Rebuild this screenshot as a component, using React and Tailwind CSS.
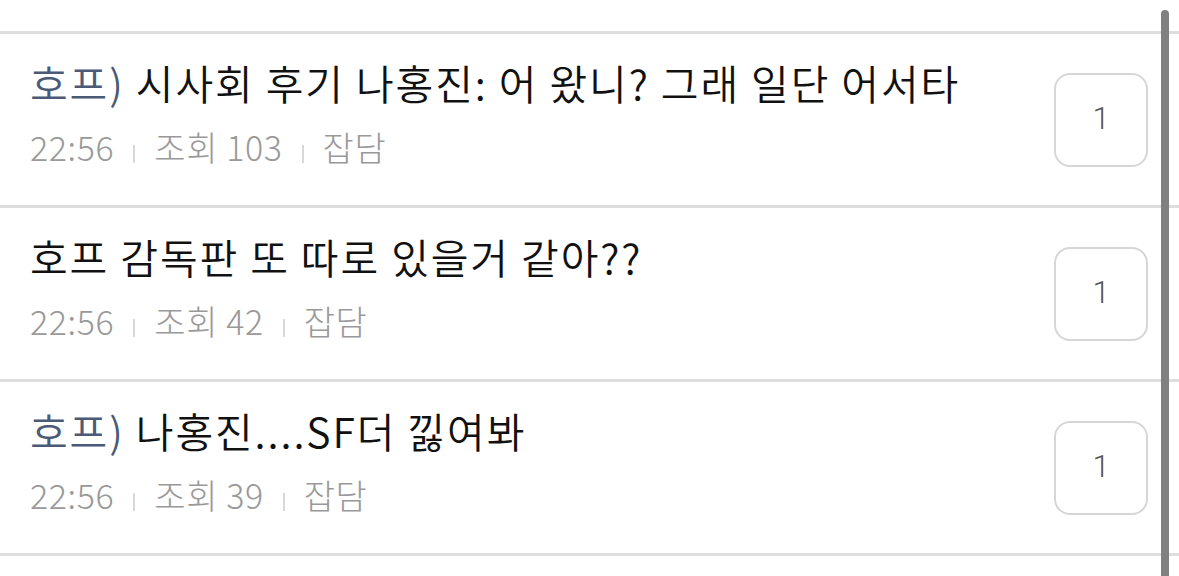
import React from 'react';

const POSTS = [
  { tag: '호프)', title: ' 시사회 후기 나홍진: 어 왔니? 그래 일단 어서타', views: 103, count: 1 },
  { tag: '', title: '호프 감독판 또 따로 있을거 같아??', views: 42, count: 1 },
  { tag: '호프)', title: ' 나홍진....SF더 \uB08B여봐', views: 39, count: 1 },
];

const font = { fontFamily: '"Noto Sans CJK KR", "Noto Sans", sans-serif' };

function Sep() {
  return <span className="w-[2px] h-[18px] bg-[#d8d8d8] mx-[19px] translate-y-[7px]" />;
}

function Row({ post }) {
  return (
    <div className="flex justify-between h-[174px] pl-[30px] pr-[31px] border-b-[3px] border-[#dedede]">
      <div className="flex flex-col pt-[22px]">
        <div className="text-[41px] leading-[52px] font-[350] text-[#111111] tracking-[1.9px]">
          {post.tag && <span className="text-[#4b5a76]">{post.tag}</span>}
          {post.title}
        </div>
        <div className="flex items-center text-[34px] leading-[44px] font-light text-[#999999] mt-[17px] tracking-[0.6px]">
          <span>22:56</span>
          <Sep />
          <span>조회 {post.views}</span>
          <Sep />
          <span>잡담</span>
        </div>
      </div>
      <div className="self-center w-[94px] h-[94px] rounded-[16px] border-2 border-[#d6d6d6] flex items-center justify-center font-['Roboto',sans-serif] text-[31px] font-light text-[#555555]">
        {post.count}
      </div>
    </div>
  );
}

export default function App() {
  return (
    <div className="relative w-[1179px] h-[576px] overflow-hidden bg-white" style={font}>
      <div className="pt-[31px]">
        <div className="border-t-[3px] border-[#dedede]" />
        {POSTS.map((p, i) => <Row key={i} post={p} />)}
      </div>
      <div className="absolute right-[10px] top-[10px] bottom-0 w-[8px] rounded-t-full bg-[#808080]" />
    </div>
  );
}
